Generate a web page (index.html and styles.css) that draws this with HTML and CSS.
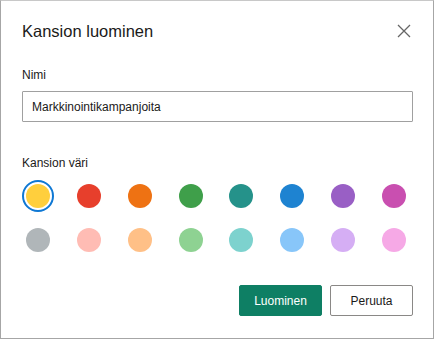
FILE: index.html
```html
<!DOCTYPE html>
<html lang="fi">
<head>
    <meta charset="UTF-8">
    <meta name="viewport" content="width=device-width, initial-scale=1.0">
    <title>Kansion luominen</title>
    <link rel="stylesheet" href="styles.css">
</head>
<body>

    <!-- Dialog -->
    <div class="dialog">
        <div class="dialog-header">
            <h1>Kansion luominen</h1>
            <button type="button" class="close-btn" aria-label="Sulje">
                <svg width="14" height="14" viewBox="0 0 14 14">
                    <path d="M1 1 L13 13 M13 1 L1 13" stroke="#666" stroke-width="1.3" fill="none"/>
                </svg>
            </button>
        </div>

        <label class="field-label" for="folder-name">Nimi</label>
        <input type="text" id="folder-name" class="text-input" value="Markkinointikampanjoita">

        <div class="field-label color-label">Kansion väri</div>
        <div class="color-grid">
            <span class="swatch selected"><span class="dot" style="background:#ffcf3d"></span></span>
            <span class="swatch"><span class="dot" style="background:#e73f2c"></span></span>
            <span class="swatch"><span class="dot" style="background:#ee7213"></span></span>
            <span class="swatch"><span class="dot" style="background:#3f9f4a"></span></span>
            <span class="swatch"><span class="dot" style="background:#25928a"></span></span>
            <span class="swatch"><span class="dot" style="background:#1e83d1"></span></span>
            <span class="swatch"><span class="dot" style="background:#995fc5"></span></span>
            <span class="swatch"><span class="dot" style="background:#c94fb0"></span></span>

            <span class="swatch"><span class="dot" style="background:#b0b6b9"></span></span>
            <span class="swatch"><span class="dot" style="background:#ffbcb4"></span></span>
            <span class="swatch"><span class="dot" style="background:#ffc087"></span></span>
            <span class="swatch"><span class="dot" style="background:#8ed292"></span></span>
            <span class="swatch"><span class="dot" style="background:#7dd2ce"></span></span>
            <span class="swatch"><span class="dot" style="background:#88c6f9"></span></span>
            <span class="swatch"><span class="dot" style="background:#d5aef4"></span></span>
            <span class="swatch"><span class="dot" style="background:#f6a9e6"></span></span>
        </div>

        <div class="dialog-footer">
            <button type="button" class="btn btn-primary">Luominen</button>
            <button type="button" class="btn btn-secondary">Peruuta</button>
        </div>
    </div>

</body>
</html>
```

FILE: styles.css
```css
body {
    font-family: 'Liberation Sans', Arial, sans-serif;
    margin: 0;
    padding: 0;
    background: white;
    color: #1b1a19;
}
.dialog {
    width: 434px;
    height: 339px;
    box-sizing: border-box;
    border: 1px solid #a6a6a6;
    border-top-color: #c8c8c8;
    padding: 0 20px 0 21px;
    display: flex;
    flex-direction: column;
}
.dialog-header {
    display: flex;
    justify-content: space-between;
    align-items: center;
    height: 58px;
    padding-top: 2px;
    box-sizing: border-box;
}
.dialog-header h1 {
    margin: 0;
    font-size: 16.5px;
    font-weight: 400;
}
.close-btn {
    background: none;
    border: none;
    padding: 0;
    margin-right: 2px;
    width: 14px;
    height: 14px;
    cursor: pointer;
    display: flex;
}
.field-label {
    display: block;
    font-size: 12px;
    line-height: 18px;
    margin-top: 7px;
    margin-bottom: 7px;
}
.text-input {
    width: 100%;
    height: 31px;
    box-sizing: border-box;
    border: 1px solid #a0a0a0;
    border-radius: 1px;
    padding: 0 9px;
    font-family: inherit;
    font-size: 12px;
    color: #1b1a19;
    margin: 0;
}
.color-label {
    margin-top: 32px;
    margin-bottom: 8px;
}
.color-grid {
    display: grid;
    grid-template-columns: repeat(8, 32px);
    justify-content: space-between;
    row-gap: 12px;
    margin-right: 3px;
}
.swatch {
    width: 32px;
    height: 32px;
    box-sizing: border-box;
    border-radius: 50%;
    display: flex;
    align-items: center;
    justify-content: center;
    cursor: pointer;
}
.swatch.selected {
    border: 2px solid #0f78d4;
}
.dot {
    width: 24px;
    height: 24px;
    border-radius: 50%;
}
.dialog-footer {
    display: flex;
    justify-content: flex-end;
    gap: 8px;
    margin-top: 29px;
}
.btn {
    width: 83px;
    height: 31px;
    box-sizing: border-box;
    border-radius: 2px;
    font-family: inherit;
    font-size: 12px;
    cursor: pointer;
    padding: 0;
}
.btn-primary {
    background-color: #0e7f64;
    border: 1px solid #0e7f64;
    color: white;
}
.btn-secondary {
    background-color: white;
    border: 1px solid #8a8886;
    color: #1b1a19;
}
```
